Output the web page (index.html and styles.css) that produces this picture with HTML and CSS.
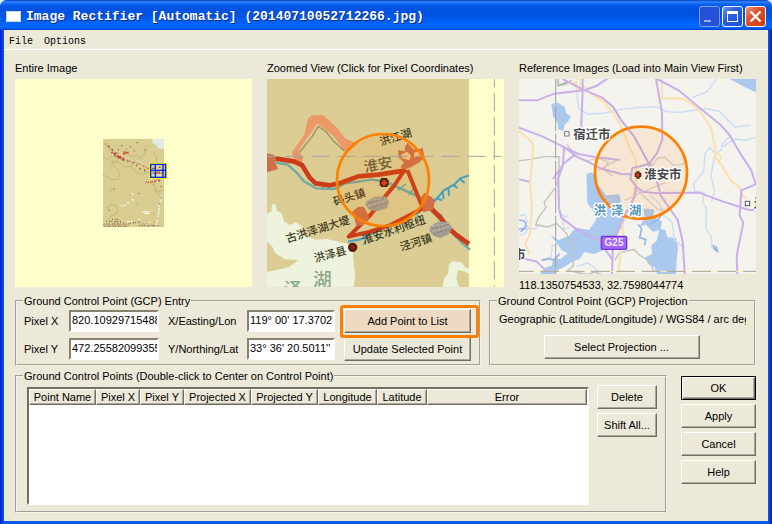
FILE: index.html
```html
<!DOCTYPE html>
<html lang="en">
<head>
    <meta charset="UTF-8">
    <meta name="viewport" content="width=device-width, initial-scale=1.0">
    <title>Image Rectifier</title>
    <link rel="stylesheet" href="styles.css">
</head>
<body>
    <div class="window">
        <header class="titlebar">
            <span class="app-icon"></span>
            <h1>Image Rectifier [Automatic] (20140710052712266.jpg)</h1>
            <button class="win-btn disabled" aria-label="Minimize">
                <svg viewBox="0 0 19 19"><path d="M4 13h7v2H4z" fill="#9aaef0"/></svg>
            </button>
            <button class="win-btn" aria-label="Maximize">
                <svg viewBox="0 0 19 19"><path d="M4 4h11v11H4zM5 7v7h9V7z" fill="#fff" fill-rule="evenodd"/></svg>
            </button>
            <button class="win-btn close" aria-label="Close">
                <svg viewBox="0 0 19 19"><path d="M4.500 4.500l10 10M14.500 4.500l-10 10" stroke="#fff" stroke-width="2.400"/></svg>
            </button>
        </header>
        <nav class="menu">
            <button>File</button>
            <button>Options</button>
        </nav>

        <main>
            <div class="views">
                <section>
                    <h2>Entire Image</h2>
                    <svg class="view" viewBox="-225 -153 711 624" preserveAspectRatio="xMidYMid slice">
                        <rect x="-900" y="-153" width="2000" height="624" fill="#ffffcc"/>
                        <rect x="39" y="27" width="183" height="264" fill="#dacd92"/>
                        <path d="M188 27h34v31l-18-3-5-10-12-5z" fill="#e0ebe2"/>
                        <g fill="none" stroke="#c2b777" stroke-width="3">
                            <path d="M39 83l19 5 4-8 19 0 2 13-18 2 1 9 19 15 2 18-7 12-18-1-15-10-9-3M64 100l25-2 13 13 19-2 8-10M120 107l15 18 22 9 14-8 17 7 1 12M115 75l12 4 14-2 11 10 4-12 8-3-2-16 11-8M48 236l13-12 15 1 8 12-3 14-18 7-10 14M190 65l8 13 3 21M170 155l18 7 15 23 18-4M192 155l5 31 12 10"/>
                        </g>
                        <g fill="none" stroke-width="5">
                            <path d="M45 41l11 9 14 17 16 13 20 9 13 4 20 5 15 6 12 8 10 5" stroke="#c98b63" stroke-dasharray="5 3 3 4"/>
                            <path d="M64 67l12 10 14 8 13 4M72 71h14M99 72l16-4M83 77l20 8M101 66l15 2M166 158l14-2 14-2 16-3" stroke="#c64021" stroke-dasharray="5 2 3 3"/>
                            <path d="M66 74l17-2 19 10 15 10M126 93l26 3 10 11M167 159l22-6 14 2" stroke="#f1eedf" stroke-dasharray="3 8"/>
                            <path d="M55 48l20 19 25 24 34 8 19 21 25 3" stroke="#5c4634" stroke-dasharray="3 12"/>
                        </g>
                        <g stroke="#eff4dc" stroke-width="4" fill="none">
                            <path d="M213 198v12l-5 14-1 20-4 24-6 18" stroke-dasharray="9 3"/>
                            <path d="M155 245h18l4 5h-15M111 218h8M92 227h7M102 225h6M125 210h7M124 192h7" />
                            <path d="M112 276l12-3 7 6M88 278h8M145 269h9M177 278h11M171 283h7" stroke-dasharray="7 3"/>
                        </g>
                        <g stroke="#705235" stroke-width="3" fill="none">
                            <path d="M41 282h75M48 274h45M119 280l32-4M146 287h60M43 289h70M66 268h24" stroke-dasharray="3 6 4 3"/>
                            <path d="M40 285h80M74 278h30M150 282h42" stroke="#a57d52" stroke-dasharray="3 5"/>
                            <path d="M69 177h4M55 240h4M212 170h4M211 203h4M207 222h4M140 38h4M94 47h4M120 50h3M131 63h3M145 190h3M165 60h3M84 60h3"/>
                            <path d="M108 57h4M61 180h3M118 195h3M202 264h3M140 223h3M190 250h3" stroke="#b4805a"/>
                        </g>
                        <path d="M189 275h5v5h-5z" fill="#ffc400"/>
                        <rect x="182" y="104" width="45" height="40" fill="#d9cd93"/>
                        <path d="M186 115h9M199 126h11M187 129h7M204 130h8M215 119h6" stroke="#c64021" stroke-width="3"/>
                        <path d="M188 137h8M200 135h12M187 121h6" stroke="#e9efdf" stroke-width="3"/>
                        <path d="M207 112h4M198 130h4M215 128h4" stroke="#444" stroke-width="3"/>
                        <path d="M178 98h54v49h-54zM184 104v37h42v-37z" fill="#ffff00" fill-rule="evenodd"/>
                        <path d="M182 103h45v39h-45zM196 103v39M219 103v39M182 121h45" fill="none" stroke="#0028e0" stroke-width="4"/>
                    </svg>
                </section>
                <section>
                    <h2>Zoomed View (Click for Pixel Coordinates)</h2>
                    <svg class="view" viewBox="21 57 711 624" preserveAspectRatio="xMidYMid slice">
                        <rect x="-900" y="57" width="2500" height="624" fill="#ffffcc"/>
                        <rect x="21" y="57" width="606" height="624" fill="#dccd94"/>
                        <!-- lake -->
                        <path d="M21 462l14-8v-18l10-6 6 22 14 8 7 24 18 11 17-9 18 13 2 25 41 15 33-2 38 9 27 6 12 22 4 48 4 28-7 41H21v-55l65-14 30-22-40-2-30-18-10-22-15-12z" fill="#edf3dc"/>
                        <path d="M548 681l5-28 12-12 1-26 12-12 28 5 10 15 11 2v17l-20-10-13-2-5 24 8 27z" fill="#edf3dc"/>
                        <!-- water -->
                        <g fill="none" stroke="#58a6ac" stroke-width="7">
                            <path d="M45 308l38 6 25 22 24 28 37 21 54 2 30-16 42-6 39-6 42 5 38 18 60 27 22 13 22 35 24 8 30 48 34 36 24 20" stroke="#70aaa0"/>
                            <path d="M264 545l38-7 42-24 64-24 72-35" stroke="#51a3bd"/>
                            <path d="M517 431l35-40 31-18 18-18 26-9M529 414l17 7M548 392l3 25M565 381l2 26M580 374l12 10M600 357l14 12M500 450l27-34" stroke="#479fc0" stroke-width="6"/>
                            <path d="M414 391l24-20M446 406l17-24M320 531l-10 25M351 516l1 18M384 501l8 20M430 480l5 20M470 463l10 15M190 378v9M237 370l4 10" stroke-width="4"/>
                        </g>
                        <!-- urban outlines -->
                        <path d="M95 278l37-52 13-51 10-9 34-1 43 39 24 32 39 15-27 22-14 1-34-46-33-26-15-11-27 38-30 43-12 17z" fill="#ec9867"/>
                        <path d="M98 284l17-13 15 23-6 14-16-2z" fill="#e69464"/>
                        <path d="M119 276l37-46 19-31 23 16 23 29 31 28" fill="none" stroke="#98905e" stroke-width="4"/>
                        <g fill="none" stroke="#cb3c18" stroke-width="14" stroke-linejoin="round">
                            <path d="M21 293l28 3 52 8 25 11 23 38 18 17 43 6 31-7 54-20 61-5 82-13"/>
                            <path d="M435 328l-31 47-33 40-40 50-65 65 61-14 63-20 99-51-17-41-30-74" stroke-width="12"/>
                            <path d="M505 437l34 34 26 33 27 23 35 25" stroke-width="14"/>
                        </g>
                        <g fill="#cf7044">
                            <path d="M21 280l20 4 8 13-5 10 11 20-34 10z"/>
                            <path d="M435 260l8-12 17 20h15l13-5 6 30-16 14-20 12-24 10-13-9 11-12-16-16-2-21 21 3z"/>
                            <path d="M276 456l18-16h18l9 17 7 20-17 18-22 4-4-18z"/>
                            <path d="M481 415l12-17 23 14 8 12-4 25-31 8z"/>
                        </g>
                        <path d="M424 284l17-9 12 12-5 14-22-6zM462 278l15-3 2 13-16 5z" fill="#ecc58b"/>
                        <g fill="#a29c91">
                            <path d="M321 422l25-12 32-1 9 18-6 17-29 10-25-5-11-15z"/>
                            <path d="M510 500l23-15h31l13 18-11 20-25 12-20-8-13-14z"/>
                        </g>
                        <path d="M324 429l49-13M329 445l51-17M517 506l48-14M520 522l50-17" stroke="#857f78" stroke-width="3" stroke-dasharray="7 4"/>
                        <path d="M326 421l48-5M324 438l55-15M514 499l52-9M518 514l50-12" stroke="#d0cec6" stroke-width="2" stroke-dasharray="9 6"/>
                        <g class="place">
                            <text transform="translate(363 257) rotate(-17)" font-size="33">洪江湖</text>
                            <text transform="translate(315 337) rotate(-11)" font-size="43" fill="#625d41">淮安</text>
                            <text transform="translate(224 437) rotate(-17)" font-size="33">码头镇</text>
                            <text transform="translate(82 548) rotate(-17)" font-size="33">古洪泽湖大堤</text>
                            <text transform="translate(166 607) rotate(-15)" font-size="33">洪泽县</text>
                            <text transform="translate(312 553) rotate(-19)" font-size="33">淮安水利枢纽</text>
                            <text transform="translate(424 573) rotate(-17)" font-size="33">泾河镇</text>
                            <text x="159" y="678" font-size="56" fill="#8ca989">湖</text>
                            <text x="71" y="708" font-size="56" fill="#8ca989">泽</text>
                        </g>
                        <circle cx="278" cy="562" r="14" fill="#5c1c0c"/>
                        <circle cx="278" cy="562" r="6" fill="#8c2c12"/>
                        <path d="M21 289h702" stroke="#a5a3a6" stroke-width="3" stroke-dasharray="54 24" stroke-dashoffset="23"/>
                        <path d="M703 57v624" stroke="#a5a3a6" stroke-width="3" stroke-dasharray="54 18" stroke-dashoffset="29"/>
                        <path d="M363 354h19v5h4v18h-4v4h-19v-4h-4v-18h4z" fill="#3c1c10"/>
                        <path d="M368 360h9v5h4v7h-4v5h-9v-5h-4v-7h4z" fill="#df3115"/>
                        <circle cx="369" cy="360" r="138" class="ring"/>
                    </svg>
                </section>
                <section>
                    <h2>Reference Images (Load into Main View First)</h2>
                    <svg class="view reference" viewBox="27 57 711 585" preserveAspectRatio="xMidYMid slice">
                        <rect x="-900" y="57" width="2500" height="585" fill="#f4f3ed"/>
                        <!-- lakes -->
                        <g fill="#abc8ef">
                            <path d="M659 57h79v40l-30-14z"/>
                            <path d="M124 132l20-4 7 5 14 9 3 17 14 10-7 15-12 11-3 19-15-7-3-19-13-20z"/>
                            <path d="M229 342l17-5 11 12 2 22 13 13 15 22 41-3 5 19-8 17 10 21 10 20-8 20-8 10-10 24-22 18-21 20-23 10-30-6-14 20-27 12-18 12-21 10-12 20-25 8-20-6 7-15 17-16 15-4 5-22 21 2 23-17-18-9-26-35-8-12 24 17 33-15 16-23 42 7 21-30-2-19-24-32z"/>
                            <path d="M400 446l32 2-2 22 26 14-4 22-22 10-22-22-18 4 14-26zM448 506l18 4 6 22 26 2 6 28-4 40-2 40h-56l-8-20-20-10-8-20 20-10-2-26 16-14z"/>
                        </g>
                        <!-- small rivers -->
                        <g fill="none" stroke="#c9dcf4" stroke-width="4">
                            <path d="M194 63l6 31 6 50 28 19 52-4 45-11 60-6 48-2 31 15 38 2 80-11 42 9 45 46 46-5M620 57l-30 38-45 19M551 370l30-35 4-54 14-20 16 20 19-11 2-18 28-28M551 370l3 23 31 7-8 25 12 20-1 61 16 25 2 31 20 14-15-15-6-10M615 281l-12 67 11 48-10 30M638 260l37-23 31 4 31-10M27 468l18-4 7 22-14 20 37 1 15-14M27 528l20-9 10-18M150 458l13 12 13-3M158 473l3 34 18-5M420 405l30 28 11 32 26 22 6 55 30 20M96 602l27-13 4-33 20-4M200 620l35-12 30 26" />
                        </g>
                        <g fill="none" stroke="#93b8e5" stroke-width="5"><path d="M27 480l16 3 7 15-18 18M27 507h20M384 493l11 13-6 27 18 5-3 17M420 493l24-14 16-22M611 555l2 12 9 7-4-15M95 601l23-5 14 5 17-20"/></g>
                        <!-- borders -->
                        <g fill="none" stroke="#bfc3b9" stroke-width="4">
                            <path d="M145 77l22-3 19-15M27 302l35-4 40-8h45v55l-9 35-36 48 6 14-22 30-9 22 36 7 28-10 30 31 5 19 13 12 1 65-17 13 35 8 27 4 18-7 42 14M328 578l43-10 18 18 31 19 12 32M328 579l-14 22"/>
                            <path d="M144 57v20l30-12" stroke="#a6ad9f"/>
                            <path d="M402 313h28l11-17 22-5 27 25 29-3 10-25M430 314l-31 14M344 421l47-22 75-32M372 382l70 65 28 8M264 332l55-30M170 252l32 40 28 10 38-6 27 10-13 22 27 21" stroke="#d7cec8"/>
                        </g>
                        <!-- yellow roads -->
                        <g fill="none" stroke="#fbe0ad" stroke-width="6">
                            <path d="M190 63l13 26 26 2 27 18 25 16 26 31 21 32 18 42 13 34 18 35 1 64-7 36-7 63-27 22 1 49-13 108M456 57v57l63 2 28 17 27 26 30 46 6 35 6 27-1 24 26 34 23 38 24 17 8 24 12 11M27 214l29 23 13 15-3 54-6 65 6 67-6 84-14 28 12 34"/>
                            <path d="M620 278l14 12-7 15-14-13zM199 57h12v27h-12zM216 77l29 12" stroke-width="4"/>
                        </g>
                        <!-- motorways -->
                        <g fill="none" stroke="#c9afeb" stroke-width="6">
                            <path d="M27 121h55l50-20 90-10 36-13 37-24M158 57l60 31M218 57v34l-5 126M218 88l57 24 34 28 24 40 39 49 43 79 6 14M438 57l18 100 1 82-16 40-24 33-50 12-6 32 19 25 19 14 35 4 133-1 73 27 75 24 48 4M417 313l26 58 9 35 51 74 15 64 6 98M442 57l64 34 59 49 67 55 25 28 42 70 25 38 13 42-43 18-5 75 11 23-8 38-12 60 2 56"/>
                            <path d="M27 203l70 26 68 34 40 19 49 9 75 9M162 263l-3 52-14 39 2 90 7 29 47 36 67 33 39 57M165 263l28 22-30 24-34 48M193 287l45 20 33 18 62 17 34 1M340 474l-31 71-3 97M379 378l-5 31-34 65M27 358l30 7M28 594l51 10 33 31"/>
                        </g>
                        <path d="M276 113l34 27 24 40 39 49 43 79 6 14" fill="none" stroke="#ab95d0" stroke-width="3" stroke-dasharray="4 6"/>
                        <path d="M137 57v585" stroke="#a0a0a0" stroke-width="3" stroke-dasharray="74 8"/>
                        <path d="M27 634h711" stroke="#f8f6bd" stroke-width="3"/>
                        <path d="M27 634h711" stroke="#a0a0a0" stroke-width="3" stroke-dasharray="56 20" stroke-dashoffset="12"/>
                        <circle cx="393" cy="338" r="138" class="ring"/>
                        <g class="city">
                            <rect x="164" y="215" width="13" height="13" fill="#fff" stroke="#777" stroke-width="3"/>
                            <text x="190" y="237" font-size="37">宿迁市</text>
                            <text x="403" y="358" font-size="37">淮安市</text>
                            <rect x="706" y="424" width="13" height="13" fill="#fff" stroke="#555" stroke-width="3"/>
                            <text x="732" y="445" font-size="37">连</text>
                            <text x="10" y="596" font-size="37">市</text>
                            <g fill="#5296bc" font-size="37">
                                <text x="251" y="464">洪</text>
                                <text x="304" y="464">泽</text>
                                <text x="357" y="464">湖</text>
                            </g>
                        </g>
                        <path d="M379 334h10v4h5v13h-5v5h-10v-5h-5v-13h5z" fill="#5a2517"/>
                        <path d="M381 338l8 6-6 8-6-7z" fill="#e33a17"/>
                        <rect x="274" y="529" width="76" height="39" rx="4" fill="#a264fa" stroke="#7038d0" stroke-width="4"/>
                        <text x="312" y="559" class="road-sign">G25</text>
                    </svg>
                    <p class="coords">118.1350754533, 32.7598044774</p>
                </section>
            </div>

            <div class="gcp">
                <fieldset class="entry">
                    <legend>Ground Control Point (GCP) Entry</legend>
                    <div class="fields">
                        <label for="pixel-x">Pixel X</label>
                        <input type="text" id="pixel-x" value="820.109297154880">
                        <label for="lon">X/Easting/Lon</label>
                        <input type="text" id="lon" value="119° 00' 17.3702''">
                        <button class="btn highlight">Add Point to List</button>
                        <label for="pixel-y">Pixel Y</label>
                        <input type="text" id="pixel-y" value="472.255820993550">
                        <label for="lat">Y/Northing/Lat</label>
                        <input type="text" id="lat" value="33° 36' 20.5011''">
                        <button class="btn">Update Selected Point</button>
                    </div>
                </fieldset>
                <fieldset class="projection">
                    <legend>Ground Control Point (GCP) Projection</legend>
                    <p>Geographic (Latitude/Longitude) / WGS84 / arc degrees</p>
                    <button class="btn">Select Projection ...</button>
                </fieldset>
            </div>

            <div class="bottom">
                <fieldset class="points">
                    <legend>Ground Control Points (Double-click to Center on Control Point)</legend>
                    <div class="points-row">
                        <div class="list">
                            <table>
                                <colgroup>
                                    <col class="c-name"><col class="c-pixel"><col class="c-pixel">
                                    <col class="c-proj"><col class="c-proj">
                                    <col class="c-lon"><col class="c-lat"><col>
                                </colgroup>
                                <thead>
                                    <tr>
                                        <th>Point Name</th>
                                        <th>Pixel X</th>
                                        <th>Pixel Y</th>
                                        <th>Projected X</th>
                                        <th>Projected Y</th>
                                        <th>Longitude</th>
                                        <th>Latitude</th>
                                        <th>Error</th>
                                    </tr>
                                </thead>
                            </table>
                        </div>
                        <div class="stack side">
                            <button class="btn">Delete</button>
                            <button class="btn">Shift All...</button>
                        </div>
                    </div>
                </fieldset>
                <div class="stack dialog">
                    <button class="btn default">OK</button>
                    <button class="btn">Apply</button>
                    <button class="btn">Cancel</button>
                    <button class="btn">Help</button>
                </div>
            </div>
        </main>
    </div>
</body>
</html>
```
FILE: styles.css
```css
*{
    box-sizing: border-box;
}

body{
    margin: 0;
    background: #dfe6f5;
    color: #000;
    font: 11px/14px "Liberation Sans", Arial, sans-serif;
}

h1, h2, p{
    margin: 0;
    font-weight: normal;
    font-size: 11px;
}

button, input{
    font: inherit;
    color: inherit;
}

.window{
    display: flex;
    flex-direction: column;
    min-height: 100vh;
    padding: 0 4px 3px;
    background: linear-gradient(to right, #0019cf, #0a5af0 4px, #0a5af0 calc(100% - 4px), #0019a0);
    border-radius: 7px 7px 0 0;
    overflow: hidden;
}

/* title bar */
.titlebar{
    display: flex;
    align-items: center;
    gap: 2px;
    height: 30px;
    margin: 0 -4px;
    padding: 2px 6px 0;
    background: linear-gradient(#0a3fc4, #2f86ff 2px, #0a62f2 4px, #0053e1 8px, #0055e6 16px, #0066ff 25px, #0060f5 28px, #003dd0);
}

.app-icon{
    width: 15px;
    height: 11px;
    background: #fff;
    border: 1px solid #c5d9f5;
}

.titlebar h1{
    flex: 1;
    min-width: 0;
    padding: 1px 0 0 3px;
    overflow: hidden;
    white-space: nowrap;
    font: bold 13px/18px "Liberation Mono", "Courier New", monospace;
    color: #fff;
    text-shadow: 1px 1px 0 #0a2a8c;
}

.win-btn{
    width: 21px;
    height: 21px;
    padding: 0;
    border: 1px solid #fff;
    border-radius: 3px;
    background: linear-gradient(135deg, #6f98f2, #2a5de0 40%, #1d50dc);
}

.win-btn svg{
    display: block;
}

.win-btn.disabled{
    border-color: #7f9df0;
    background: #2452d6;
}

.win-btn.close{
    background: linear-gradient(135deg, #f0987c, #e0502c 40%, #c93c10);
}

.menu{
    display: flex;
    gap: 11px;
    height: 20px;
    padding: 4px 5px 0;
    background: #ece9d8;
    border-bottom: 1px solid #fff;
}

.menu button{
    padding: 0;
    border: none;
    background: none;
    font: 10px/14px "Liberation Mono", "Courier New", monospace;
}

main{
    flex: 1;
    display: flex;
    flex-direction: column;
    padding: 11px 12px 8px 11px;
    background: #ece9d8;
}

/* image views */
.views{
    display: grid;
    grid-template-columns: repeat(3, 1fr);
    gap: 15px;
}

.views section{
    min-width: 0;
}

.views h2{
    margin-bottom: 4px;
    white-space: nowrap;
}

.view{
    display: block;
    width: 100%;
    height: 208px;
}

.view.reference{
    height: 195px;
}

.coords{
    padding-top: 4px;
}

.place, .city{
    font-family: "Noto Sans CJK SC", sans-serif;
    font-weight: 500;
    fill: #40391f;
}

.city{
    font-weight: bold;
    fill: #494949;
}

.city text{
    stroke: #fff;
    stroke-width: 8px;
    paint-order: stroke;
}

.road-sign{
    font: bold 30px "Liberation Sans", Arial, sans-serif;
    fill: #f1e4ff;
    text-anchor: middle;
}

.ring{
    fill: rgba(255, 127, 0, 0.1);
    stroke: #ff7f00;
    stroke-width: 8px;
}

/* group boxes */
fieldset{
    min-width: 0;
    margin: 0;
    border: 2px groove #f5f3e8;
}

legend{
    padding: 0 1px;
    white-space: nowrap;
}

.gcp{
    display: grid;
    grid-template-columns: 466fr 267fr;
    gap: 8px;
    margin-top: 2px;
}

.entry{
    padding: 1px 8px 3px 6px;
}

.fields{
    display: grid;
    grid-template-columns: 36px 90px 70px 88px 1fr;
    align-items: center;
    gap: 4px 9px;
    padding-left: 1px;
}

.fields label{
    white-space: nowrap;
}

.fields input{
    width: 100%;
    height: 22px;
    padding: 0 0 2px 1px;
    border: 2px solid;
    border-color: #85826f #fff #fff #85826f;
    border-radius: 0;
    background: #fff;
}

.projection{
    padding: 4px 8px 5px 6px;
}

.projection p{
    padding-left: 2px;
    overflow: hidden;
    white-space: nowrap;
}

.projection .btn{
    display: block;
    width: 156px;
    margin: 9px auto 0;
}

.btn{
    height: 24px;
    padding: 0 2px;
    border: 1px solid;
    border-color: #fff #716f64 #716f64 #fff;
    border-radius: 0;
    background: #ece9d8;
    box-shadow: inset -1px -1px 0 #aca899;
    white-space: nowrap;
}

.btn.default{
    border-color: #000;
    box-shadow: inset 1px 1px 0 #fff, inset -1px -1px 0 #716f64, inset -2px -2px 0 #aca899;
}

.btn.highlight{
    position: relative;
    z-index: 1;
    background: #eedac2;
}

/* marker frame round the button */
.btn.highlight::after{
    content: "";
    position: absolute;
    inset: -5px -9px -6px -5px;
    border: 3px solid #ff7f00;
    border-radius: 3px;
}

/* control point list */
.bottom{
    flex: 1;
    display: flex;
    gap: 14px;
    margin-top: 3px;
}

.points{
    flex: 1;
    display: flex;
    flex-direction: column;
    padding: 2px 8px 6px 6px;
}

.points-row{
    flex: 1;
    display: flex;
    gap: 8px;
    padding-left: 4px;
}

.list{
    flex: 1;
    min-width: 0;
    min-height: 118px;
    margin-top: 2px;
    border: 2px solid;
    border-color: #716f64 #fff #fff #716f64;
    background: #fff;
}

table{
    width: 100%;
    table-layout: fixed;
    border-collapse: separate;
    border-spacing: 0;
}

th{
    height: 16px;
    padding: 0;
    border: 1px solid;
    border-color: #fff #716f64 #716f64 #fff;
    background: #ece9d8;
    box-shadow: inset -1px -1px 0 #aca899;
    font-weight: normal;
    white-space: nowrap;
}

.c-name, .c-proj{
    width: 67px;
}

.c-pixel{
    width: 44px;
}

.c-lon{
    width: 59px;
}

.c-lat{
    width: 50px;
}

.stack{
    display: flex;
    flex-direction: column;
    gap: 4px;
}

.side{
    width: 60px;
}

.dialog{
    width: 75px;
    padding-top: 7px;
}
```
